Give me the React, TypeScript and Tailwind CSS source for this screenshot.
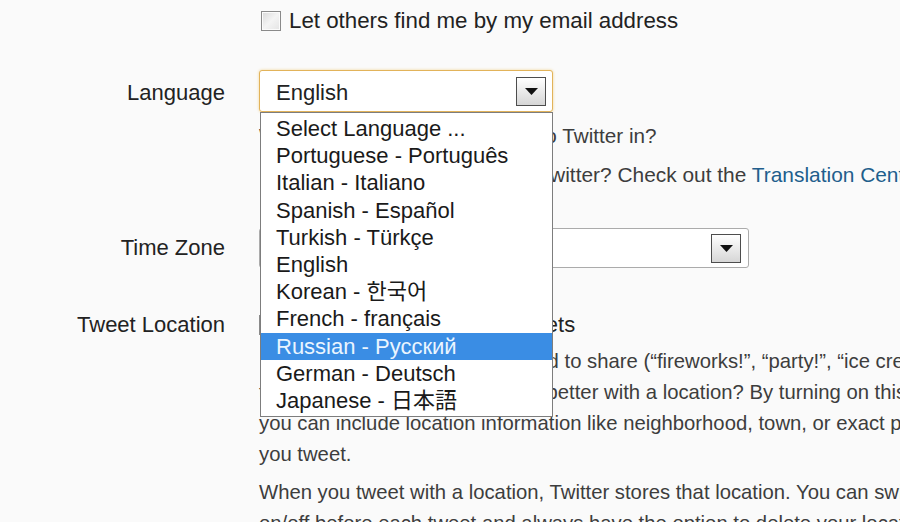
import React from 'react';

const languages = [
  'Select Language ...',
  'Portuguese - Português',
  'Italian - Italiano',
  'Spanish - Español',
  'Turkish - Türkçe',
  'English',
  'Korean - 한국어',
  'French - français',
  'Russian - Русский',
  'German - Deutsch',
  'Japanese - 日本語',
];

function SelectButton() {
  return (
    <span className="flex h-[29px] w-[30px] shrink-0 items-center justify-center border border-[#4d4d4d] bg-gradient-to-b from-[#ffffff] to-[#d6d6d6]">
      <svg width="13" height="7" viewBox="0 0 13 7">
        <path d="M0 0h13L6.5 7z" fill="#111" />
      </svg>
    </span>
  );
}

function Checkbox() {
  return (
    <span className="inline-block h-[20px] w-[20px] shrink-0 border border-[#8a8a8a] bg-gradient-to-br from-[#d9d9d9] via-[#f4f4f4] to-[#e4e4e4] shadow-[inset_0_0_0_1px_#fbfbfb]" />
  );
}

export default function App() {
  return (
    <div
      className="h-[522px] w-[900px] overflow-hidden bg-[#fafafa] pt-[7px] text-[#222]"
      style={{ fontFamily: '"Liberation Sans", Arial, "Noto Sans CJK KR", sans-serif' }}
    >
      {/* email visibility */}
      <div className="flex">
        <div className="w-[225px] shrink-0" />
        <label className="ml-[36px] flex items-center gap-[8px] text-[22.3px] leading-[27px] whitespace-nowrap">
          <Checkbox />
          Let others find me by my email address
        </label>
      </div>

      {/* language */}
      <div className="mt-[36px] flex">
        <div className="w-[225px] shrink-0 pt-[2px] text-right text-[22px] leading-[42px]">Language</div>
        <div className="ml-[34px] w-[700px] shrink-0">
          <div className="relative w-[294px]">
            <div className="flex h-[42px] items-center justify-between rounded-[3px] border border-[#e2b35a] bg-white pr-[6px] pl-[16px] shadow-[0_0_3px_#f1d594]">
              <span className="pt-[3px] text-[22px]">English</span>
              <SelectButton />
            </div>
            <ul className="absolute top-[42px] left-[1px] z-10 w-[293px] border border-[#7d7d7d] bg-white py-[2px] text-[22px] whitespace-nowrap">
              {languages.map((lang) => (
                <li
                  key={lang}
                  className={
                    lang.startsWith('Russian')
                      ? 'h-[27.2px] bg-[#3a8de4] pl-[15px] leading-[27.2px] text-[#eaf5ff]'
                      : 'h-[27.2px] pl-[15px] leading-[27.2px] text-[#1a1a1a]'
                  }
                >
                  {lang}
                </li>
              ))}
            </ul>
          </div>
          <p className="mt-[8px] text-[20.7px] leading-[31px] whitespace-nowrap text-[#3d3d3d]">
            What language would you like to Twitter in?
          </p>
          <p className="mt-[8px] text-[20.9px] leading-[31px] whitespace-nowrap text-[#3d3d3d]">
            Interested in helping translate Twitter? Check out the{' '}
            <a className="text-[#215e8c]">Translation Center</a>
          </p>
        </div>
      </div>

      {/* time zone */}
      <div className="mt-[38px] flex">
        <div className="w-[225px] shrink-0 text-right text-[22px] leading-[40px]">Time Zone</div>
        <div className="ml-[34px] shrink-0">
          <div className="flex h-[40px] w-[490px] items-center justify-end rounded-[3px] border border-[#ababab] bg-white pr-[7px]">
            <SelectButton />
          </div>
        </div>
      </div>

      {/* tweet location */}
      <div className="mt-[41px] flex">
        <div className="w-[225px] shrink-0 text-right text-[22px] leading-[31px] whitespace-nowrap">Tweet Location</div>
        <div className="ml-[34px] w-[900px] shrink-0 whitespace-nowrap">
          <label className="flex items-center gap-[8px] text-[22px] leading-[31px]">
            <Checkbox />
            Add a location to your Tweets
          </label>
          <p className="mt-[6px] text-[20.3px] leading-[31px] text-[#3d3d3d]">
            Ever have something you wanted to share (&ldquo;fireworks!&rdquo;, &ldquo;party!&rdquo;, &ldquo;ice cream!&rdquo;)
            <br />
            that you thought would be even better with a location? By turning on this feature,
            <br />
            you can include location information like neighborhood, town, or exact point when
            <br />
            you tweet.
          </p>
          <p className="mt-[7px] text-[20.3px] leading-[31px] text-[#3d3d3d]">
            When you tweet with a location, Twitter stores that location. You can switch location
            <br />
            on/off before each tweet and always have the option to delete your location history.
          </p>
        </div>
      </div>
    </div>
  );
}
